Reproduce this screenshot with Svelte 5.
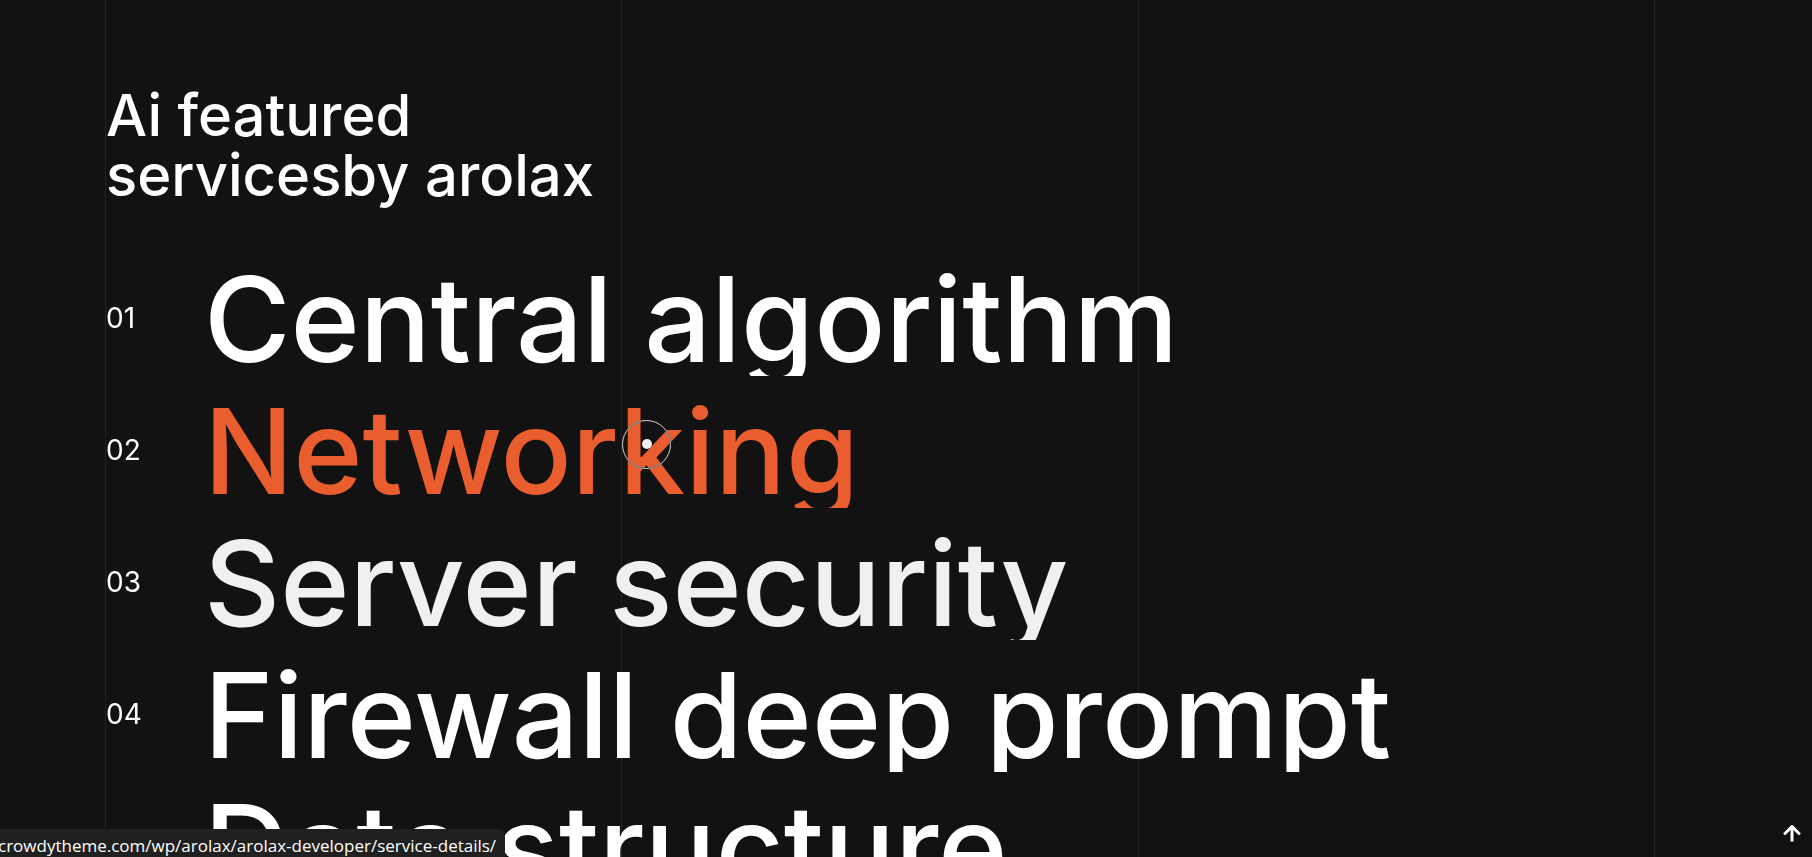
<script>
  const services = [
    { number: '01', name: 'Central algorithm' },
    { number: '02', name: 'Networking', active: true },
    { number: '03', name: 'Server security', muted: true },
    { number: '04', name: 'Firewall deep prompt' },
    { number: '05', name: 'Data structure' }
  ];
</script>

<main>
  <div class="guides" aria-hidden="true">
    <span></span><span></span><span></span>
  </div>

  <section>
    <h2>Ai featured<br />servicesby arolax</h2>
    <ol>
      {#each services as service}
        <li>
          <span class="number">{service.number}</span>
          <a href="#service-details" class:active={service.active} class:muted={service.muted}>{service.name}</a>
        </li>
      {/each}
    </ol>
  </section>

  <div class="ring" aria-hidden="true"></div>
  <div class="dot" aria-hidden="true"></div>

  <div class="status">crowdytheme.com/wp/arolax/arolax-developer/service-details/</div>

  <button type="button" aria-label="Scroll to top">
    <svg viewBox="0 0 18 18" width="18" height="18" fill="none" stroke="#fff" stroke-width="3" stroke-linejoin="round">
      <path d="M9 17.5V3" />
      <path d="M2 9.5L9 2.5L16 9.5" stroke-linecap="round" />
    </svg>
  </button>
</main>

<style>
  :global(body) {
    margin: 0;
    background: #121212;
  }

  main {
    position: relative;
    height: 100vh;
    overflow: hidden;
    background: #121212;
    color: #fff;
    font-family: Inter, sans-serif;
  }

  .guides {
    position: absolute;
    inset: 0 157px 0 105px;
    display: grid;
    grid-template-columns: repeat(3, 1fr);
    border-left: 1px solid #232323;
  }

  .guides span {
    border-right: 1px solid #232323;
  }

  section {
    padding: 85px 106px 0;
    position: relative;
  }

  h2 {
    margin: 0 0 57px;
    font-size: 58px;
    line-height: 60px;
    font-weight: 500;
  }

  ol {
    display: flex;
    flex-direction: column;
    gap: 18px;
    margin: 0;
    padding: 0;
    list-style: none;
  }

  li {
    display: grid;
    grid-template-columns: 98px 1fr;
    align-items: center;
  }

  .number {
    padding-bottom: 2px;
    font-size: 28px;
    line-height: 34px;
  }

  a {
    overflow: hidden;
    color: #fff;
    font-size: 118px;
    line-height: 114px;
    font-weight: 500;
    white-space: nowrap;
    text-decoration: none;
  }

  a.active {
    color: #e95d2f;
  }

  a.muted {
    color: #f0f0f0;
  }

  .ring {
    position: absolute;
    left: 622px;
    top: 420px;
    box-sizing: border-box;
    width: 49px;
    height: 49px;
    border: 1px solid #fff;
    border-radius: 50%;
    opacity: 0.9;
    mix-blend-mode: difference;
  }

  .dot {
    position: absolute;
    left: 642px;
    top: 439px;
    width: 10px;
    height: 10px;
    border-radius: 50%;
    background: #eee;
  }

  .status {
    position: absolute;
    left: -2px;
    bottom: 0;
    padding: 6px 9px 0 0;
    border-top-right-radius: 8px;
    background: #202020;
    font-family: "Open Sans", sans-serif;
    font-size: 17px;
    line-height: 22px;
  }

  button {
    position: absolute;
    right: 0;
    bottom: 4px;
    display: grid;
    place-items: center;
    width: 40px;
    height: 40px;
    padding: 0;
    border: 0;
    border-radius: 4px;
    background: #111;
  }
</style>
